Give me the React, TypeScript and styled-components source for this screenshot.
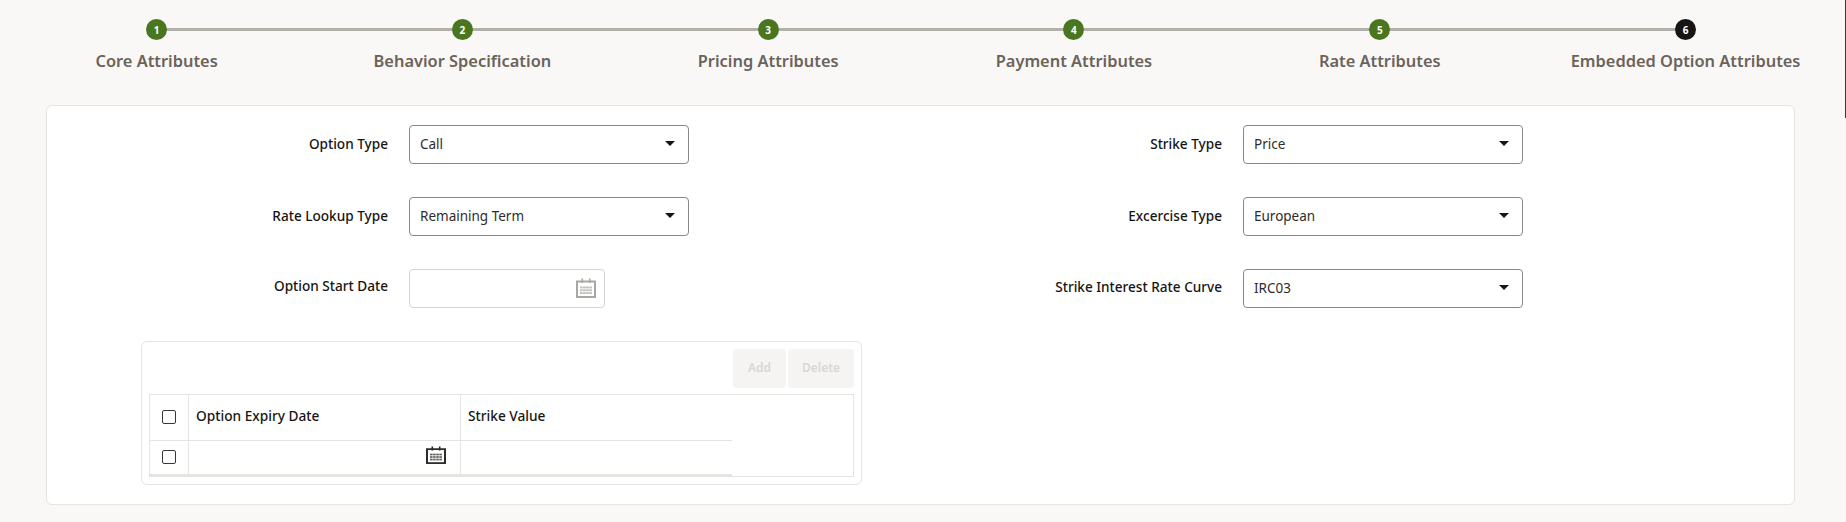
import styled, { createGlobalStyle } from 'styled-components'

const GlobalStyle = createGlobalStyle`
  html, body {
    margin: 0;
    padding: 0;
    background: #f9f8f6;
    font-family: 'Noto Sans', 'Open Sans', sans-serif;
    color: #161513;
  }
`

const Page = styled.div`
  position: relative;
  width: 1846px;
  height: 522px;
  overflow: hidden;
  box-sizing: border-box;
  padding-top: 19px;
`

const ScrollEdge = styled.div`
  position: absolute;
  top: 0;
  right: 0;
  width: 1px;
  height: 118px;
  background: #3a3937;
`

const Stepper = styled.ol`
  display: grid;
  grid-template-columns: repeat(6, 305.8px);
  margin: 0 0 0 3.7px;
  padding: 0;
  list-style: none;
  height: 86px;
`

const Step = styled.li`
  position: relative;
  display: flex;
  flex-direction: column;
  align-items: center;
  gap: 10px;

  &:not(:last-child)::after {
    content: '';
    position: absolute;
    top: 9px;
    left: 50%;
    width: 100%;
    height: 3px;
    background: #b2b0ab;
  }
`

const StepDot = styled.span<{ $current?: boolean }>`
  position: relative;
  z-index: 1;
  width: 21px;
  height: 21px;
  border-radius: 50%;
  display: flex;
  align-items: center;
  justify-content: center;
  background: ${({ $current }) => ($current ? '#161513' : '#4a7620')};
  color: #fff;
  font-size: 10px;
  font-weight: 700;
`

const StepLabel = styled.span`
  font-size: 16.4px;
  line-height: 22px;
  font-weight: 600;
  color: #6b635b;
  white-space: nowrap;
`

const Card = styled.section`
  box-sizing: border-box;
  width: 1749px;
  height: 400px;
  margin-left: 46px;
  padding: 19px 0 0 1px;
  background: #fff;
  border: 1px solid #e6e4e1;
  border-radius: 6px;
`

const FormGrid = styled.div`
  display: grid;
  grid-template-columns: 708px 1fr;
`

const FormColumn = styled.div<{ $labelWidth: number }>`
  display: grid;
  grid-template-columns: ${({ $labelWidth }) => $labelWidth}px 280px;
  grid-auto-rows: 39px;
  column-gap: 21px;
  row-gap: 33px;
  align-items: center;
`

const Label = styled.label<{ $lift?: number }>`
  text-align: right;
  font-size: 13.6px;
  font-weight: 500;
  color: #161513;
  padding-bottom: ${({ $lift }) => $lift ?? 2}px;
`

const Select = styled.div`
  box-sizing: border-box;
  height: 39px;
  padding: 0 13px 2px 10px;
  display: flex;
  align-items: center;
  justify-content: space-between;
  border: 1px solid #8a8885;
  border-radius: 4px;
  font-size: 13.5px;
  color: #2e2c2a;
`

const Caret = styled.span`
  width: 0;
  height: 0;
  border-left: 5px solid transparent;
  border-right: 5px solid transparent;
  border-top: 5px solid #161513;
`

const DateInput = styled.div`
  box-sizing: border-box;
  width: 196px;
  height: 39px;
  padding: 0 8px 1px 0;
  display: flex;
  align-items: center;
  justify-content: flex-end;
  border: 1px solid #d6d4d1;
  border-radius: 4px;
`

const TablePanel = styled.div`
  box-sizing: border-box;
  width: 721px;
  height: 144px;
  margin: 33px 0 0 93px;
  padding: 7px 7px 7px;
  border: 1px solid #e6e4e1;
  border-radius: 6px;
`

const Toolbar = styled.div`
  display: flex;
  justify-content: flex-end;
  gap: 2px;
  height: 39px;
  margin-bottom: 6px;
`

const ToolButton = styled.button<{ $width: number }>`
  width: ${({ $width }) => $width}px;
  height: 39px;
  padding: 0 0 2px;
  border: 0;
  border-radius: 4px;
  background: #f5f4f2;
  color: #d9d7d3;
  font-family: inherit;
  font-size: 12px;
  font-weight: 600;
`

const TableFrame = styled.div`
  box-sizing: border-box;
  height: 83px;
  border: 1px solid #e6e4e1;
`

const TableRow = styled.div<{ $height: number; $last?: boolean }>`
  box-sizing: border-box;
  display: grid;
  grid-template-columns: 39px 272px 271px;
  width: 582px;
  height: ${({ $height }) => $height}px;
  border-bottom: ${({ $last }) => ($last ? '2px solid #e6e4e1' : '1px solid #e6e4e1')};
`

const Cell = styled.div`
  display: flex;
  align-items: center;
  padding: 0 7px 4px;
  border-right: 1px solid #e6e4e1;
  font-size: 13.7px;
  font-weight: 500;
  color: #161513;

  &:last-child {
    border-right: 0;
  }
`

const CheckCell = styled(Cell)`
  justify-content: center;
  padding: 0 0 1px;
`

const DateCell = styled(Cell)`
  justify-content: flex-end;
  padding: 0 14px 5px 0;
`

const Checkbox = styled.span`
  box-sizing: border-box;
  width: 14px;
  height: 14px;
  border: 1.5px solid #3a3937;
  border-radius: 2px;
`

function CalendarIcon({ color, width, height }: { color: string; width: number; height: number }) {
  const dots: [number, number][] = []
  for (let r = 0; r < 3; r++) {
    for (let c = 0; c < 4; c++) {
      dots.push([4 + c * 3.1, 8.5 + r * 2.8])
    }
  }
  return (
    <svg width={width} height={height} viewBox="0 0 20 20" preserveAspectRatio="none" aria-hidden="true">
      <rect x="1" y="3.5" width="18" height="15.5" fill="none" stroke={color} strokeWidth="2" />
      <rect x="5.5" y="0.5" width="1.6" height="4.5" fill={color} />
      <rect x="12.9" y="0.5" width="1.6" height="4.5" fill={color} />
      {dots.map(([x, y]) => (
        <rect key={`${x}-${y}`} x={x} y={y} width="2.6" height="1.9" fill={color} opacity="0.75" />
      ))}
    </svg>
  )
}

const steps = [
  'Core Attributes',
  'Behavior Specification',
  'Pricing Attributes',
  'Payment Attributes',
  'Rate Attributes',
  'Embedded Option Attributes',
]

export default function App() {
  return (
    <Page>
      <GlobalStyle />
      <ScrollEdge />
      <Stepper>
        {steps.map((step, i) => (
          <Step key={step}>
            <StepDot $current={i === steps.length - 1}>{i + 1}</StepDot>
            <StepLabel>{step}</StepLabel>
          </Step>
        ))}
      </Stepper>
      <Card>
        <FormGrid>
          <FormColumn $labelWidth={340}>
            <Label>Option Type</Label>
            <Select>
              Call
              <Caret />
            </Select>
            <Label>Rate Lookup Type</Label>
            <Select>
              Remaining Term
              <Caret />
            </Select>
            <Label $lift={7}>Option Start Date</Label>
            <DateInput>
              <CalendarIcon color="#a9a7a3" width={20} height={20} />
            </DateInput>
          </FormColumn>
          <FormColumn $labelWidth={466}>
            <Label>Strike Type</Label>
            <Select>
              Price
              <Caret />
            </Select>
            <Label>Excercise Type</Label>
            <Select>
              European
              <Caret />
            </Select>
            <Label $lift={4}>Strike Interest Rate Curve</Label>
            <Select>
              IRC03
              <Caret />
            </Select>
          </FormColumn>
        </FormGrid>
        <TablePanel>
          <Toolbar>
            <ToolButton $width={53}>Add</ToolButton>
            <ToolButton $width={66}>Delete</ToolButton>
          </Toolbar>
          <TableFrame>
            <TableRow $height={46}>
              <CheckCell>
                <Checkbox />
              </CheckCell>
              <Cell>Option Expiry Date</Cell>
              <Cell>Strike Value</Cell>
            </TableRow>
            <TableRow $height={35} $last>
              <CheckCell>
                <Checkbox />
              </CheckCell>
              <DateCell>
                <CalendarIcon color="#2e2c2a" width={20} height={18} />
              </DateCell>
              <Cell />
            </TableRow>
          </TableFrame>
        </TablePanel>
      </Card>
    </Page>
  )
}
